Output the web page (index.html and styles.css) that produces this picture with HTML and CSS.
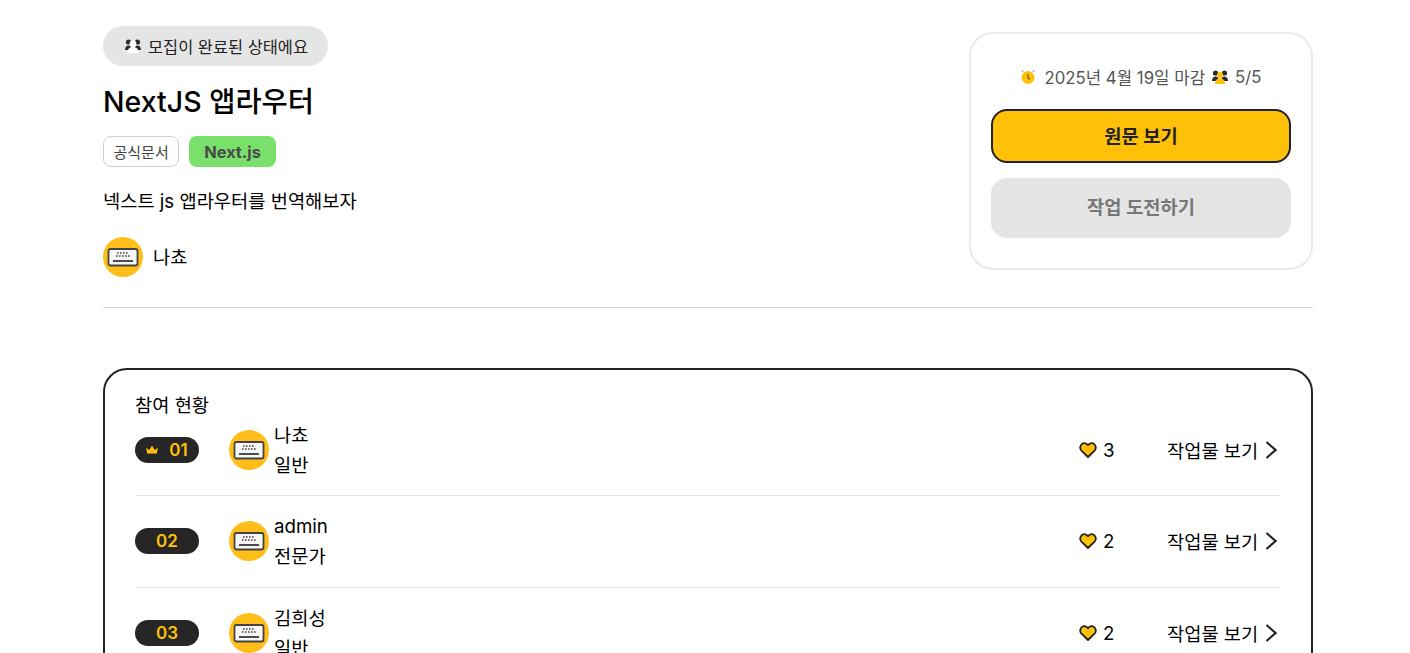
FILE: index.html
```html
<!DOCTYPE html>
<html lang="ko">
<head>
  <meta charset="utf-8">
  <title>NextJS 앱라우터</title>
  <link rel="stylesheet" href="styles.css">
</head>
<body>
  <svg class="defs" width="0" height="0">
    <symbol id="keyboard" viewBox="0 0 40 40">
      <circle cx="20" cy="20" r="20" fill="#ffbe1a"/>
      <rect x="5.500" y="12" width="29" height="16.500" rx="2" fill="#f7f7f7" stroke="#444" stroke-width="1.800"/>
      <path d="M14 16h1.600M17 16h1.600M20 16h1.600M23 16h1.600M13 19h1.600M16 19h1.600M19 19h1.600M22 19h1.600M25 19h1.600" stroke="#444" stroke-width="1.700"/>
      <path d="M10 24h20" stroke="#444" stroke-width="1.900"/>
    </symbol>
    <symbol id="heart" viewBox="0 0 18 16">
      <path d="M9 15 2.400 8.600C.2 6.300 1.200 1.900 4.800 1.200 6.500.9 8 1.700 9 3.300 10 1.700 11.500.9 13.200 1.200 16.800 1.900 17.800 6.300 15.600 8.600Z" fill="#ffc107" stroke="#222" stroke-width="1.800" stroke-linejoin="round"/>
    </symbol>
    <symbol id="chevron" viewBox="0 0 12 18">
      <path d="M1.500 1 10.500 9 1.500 17" fill="none" stroke="#222" stroke-width="2.200"/>
    </symbol>
    <symbol id="people" viewBox="0 0 16 13">
      <circle cx="3.500" cy="3" r="2.600"/>
      <circle cx="12.500" cy="3" r="2.600"/>
      <path d="M0 11c0-3 1.500-4.500 3.500-4.500S7 8 7 11ZM9 11c0-3 1.500-4.500 3.500-4.500S16 8 16 11Z"/>
    </symbol>
  </svg>

  <main class="page">
    <section class="header">
      <div class="info">
        <div class="status">
          <svg class="status-icon" width="16" height="14" viewBox="0 0 16 14">
            <use href="#people" width="16" height="13" fill="#2b2b2b"/>
            <circle cx="8" cy="5" r="3.400" fill="#fff"/>
            <path d="M2.500 14c0-4 2-6 5.500-6s5.500 2 5.500 6Z" fill="#fff"/>
          </svg>
          <span>모집이 완료된 상태에요</span>
        </div>
        <h1 class="title">NextJS 앱라우터</h1>
        <div class="tags">
          <span class="tag-doc">공식문서</span>
          <span class="tag-field">Next.js</span>
        </div>
        <p class="desc">넥스트 js 앱라우터를 번역해보자</p>
        <div class="author">
          <svg class="avatar"><use href="#keyboard"/></svg>
          <span class="author-name">나쵸</span>
        </div>
      </div>

      <aside class="panel">
        <div class="meta">
          <svg class="meta-clock" width="16" height="16" viewBox="0 0 16 16">
            <path d="M1.500 3 3.500 1M14.500 3 12.500 1" stroke="#888" stroke-width="1"/>
            <circle cx="8" cy="8.500" r="6.500" fill="#ffc107"/>
            <path d="M8 5v3.800l1.800 1.600" fill="none" stroke="#5a4300" stroke-width="1.100"/>
          </svg>
          <span>2025년 4월 19일 마감</span>
          <svg width="16" height="14" viewBox="0 0 16 14">
            <use href="#people" width="16" height="13" fill="#2b2b2b"/>
            <circle cx="8" cy="5" r="3" fill="#ffc107"/>
            <path d="M3 14c0-4 2-5.500 5-5.500s5 1.500 5 5.500Z" fill="#ffc107"/>
          </svg>
          <span>5/5</span>
        </div>
        <button class="btn-source">원문 보기</button>
        <button class="btn-challenge">작업 도전하기</button>
      </aside>
    </section>

    <section class="board">
      <h2 class="board-title">참여 현황</h2>

      <div class="row row-first">
        <div class="rank">
          <svg class="crown" width="12" height="10" viewBox="0 0 12 10"><path d="M1 8.500.3 2.800 3.300 5 6 .8 8.700 5l3-2.200L11 8.500Z" fill="#ffc107"/></svg>
          <span>01</span>
        </div>
        <div class="user">
          <svg class="avatar"><use href="#keyboard"/></svg>
          <div class="user-text"><span>나쵸</span><span>일반</span></div>
        </div>
        <div class="likes">
          <svg width="18" height="16"><use href="#heart"/></svg>
          <span class="like-count">3</span>
        </div>
        <a class="view">작업물 보기 <svg width="12" height="18"><use href="#chevron"/></svg></a>
      </div>

      <div class="row">
        <div class="rank"><span>02</span></div>
        <div class="user">
          <svg class="avatar"><use href="#keyboard"/></svg>
          <div class="user-text"><span>admin</span><span>전문가</span></div>
        </div>
        <div class="likes">
          <svg width="18" height="16"><use href="#heart"/></svg>
          <span class="like-count">2</span>
        </div>
        <a class="view">작업물 보기 <svg width="12" height="18"><use href="#chevron"/></svg></a>
      </div>

      <div class="row">
        <div class="rank"><span>03</span></div>
        <div class="user">
          <svg class="avatar"><use href="#keyboard"/></svg>
          <div class="user-text"><span>김희성</span><span>일반</span></div>
        </div>
        <div class="likes">
          <svg width="18" height="16"><use href="#heart"/></svg>
          <span class="like-count">2</span>
        </div>
        <a class="view">작업물 보기 <svg width="12" height="18"><use href="#chevron"/></svg></a>
      </div>
    </section>
  </main>
</body>
</html>
```

FILE: styles.css
```css
* {
  box-sizing: border-box;
}

html,
body {
  height: 100%;
  overflow: hidden;
}

body {
  margin: 0;
  background: #fff;
  color: #000;
  font-family: Inter, "Noto Sans CJK KR", sans-serif;
}

.defs {
  display: block;
  height: 0;
}

.page {
  width: 1210px;
  margin-left: 103px;
  padding-top: 26px;
}

.header {
  display: flex;
  justify-content: space-between;
  align-items: flex-start;
  height: 282px;
  border-bottom: 1px solid #d8d8d8;
}

.status {
  display: inline-flex;
  align-items: center;
  gap: 7px;
  height: 40px;
  padding: 0 20px 0 22px;
  background: #e5e5e5;
  border-radius: 20px;
  color: #222;
  font-size: 16.400px;
}

.title {
  margin: 18px 0 0;
  font-size: 28.500px;
  line-height: 36px;
  font-weight: 500;
}

.tags {
  display: flex;
  gap: 10px;
  margin-top: 16px;
}

.tag-doc {
  display: flex;
  align-items: center;
  height: 31px;
  padding: 0 9.500px;
  background: #fff;
  border: 1px solid #d0d0d0;
  border-radius: 8px;
  color: #444;
  font-size: 15px;
}

.tag-field {
  display: flex;
  align-items: center;
  height: 31px;
  padding: 0 15px;
  background: #7ae06c;
  border-radius: 8px;
  color: #4a4a4a;
  font-size: 16.400px;
  font-weight: 700;
}

.desc {
  margin: 23px 0 0;
  font-size: 18.700px;
  line-height: 24px;
}

.author {
  display: flex;
  align-items: center;
  gap: 10px;
  margin-top: 23px;
  font-size: 18.700px;
}

.author-name {
  padding-bottom: 3px;
}

.avatar {
  width: 40px;
  height: 40px;
  flex: none;
}

.panel {
  display: flex;
  flex-direction: column;
  width: 344px;
  height: 238px;
  margin-top: 6px;
  padding: 0 20px;
  border: 2px solid #e8eaed;
  border-radius: 24px;
}

.meta {
  display: flex;
  justify-content: center;
  align-items: center;
  gap: 7px;
  height: 75px;
  padding-top: 11px;
  color: #555;
  font-size: 16.800px;
}

.meta-clock {
  margin-right: 1px;
}

.btn-source,
.btn-challenge {
  width: 300px;
  font-family: inherit;
  font-size: 18.700px;
  font-weight: 600;
}

.btn-source {
  height: 54px;
  padding-bottom: 5px;
  background: #ffc107;
  border: 2px solid #222;
  border-radius: 16px;
  color: #222;
}

.btn-challenge {
  height: 60px;
  margin-top: 15px;
  padding-bottom: 7px;
  background: #e5e5e5;
  border: none;
  border-radius: 16px;
  color: #777;
}

.board {
  margin-top: 60px;
  padding: 22px 30px;
  border: 2px solid #222;
  border-radius: 24px;
}

.board-title {
  margin: 0;
  font-size: 18.700px;
  line-height: 28px;
  font-weight: 400;
}

.row {
  display: flex;
  align-items: center;
  height: 92px;
  padding-bottom: 2px;
  border-bottom: 1px solid #e5e5e5;
  font-size: 18.700px;
}

.row-first {
  height: 76px;
  padding-bottom: 16px;
}

.rank {
  display: flex;
  justify-content: center;
  align-items: center;
  gap: 11px;
  width: 64px;
  height: 26px;
  background: #262626;
  border-radius: 13px;
  color: #ffc107;
  font-size: 17px;
  font-weight: 600;
}

.user {
  display: flex;
  align-items: center;
  gap: 5px;
  margin-left: 30px;
  flex: 1;
}

.user-text {
  display: flex;
  flex-direction: column;
  gap: 4px;
  padding-top: 2px;
  line-height: 26px;
}

.likes {
  display: flex;
  align-items: center;
  gap: 6px;
  width: 88px;
}

.like-count {
  padding-top: 2px;
}

.view {
  display: flex;
  align-items: center;
  gap: 7px;
  width: 114px;
  white-space: nowrap;
}
```
